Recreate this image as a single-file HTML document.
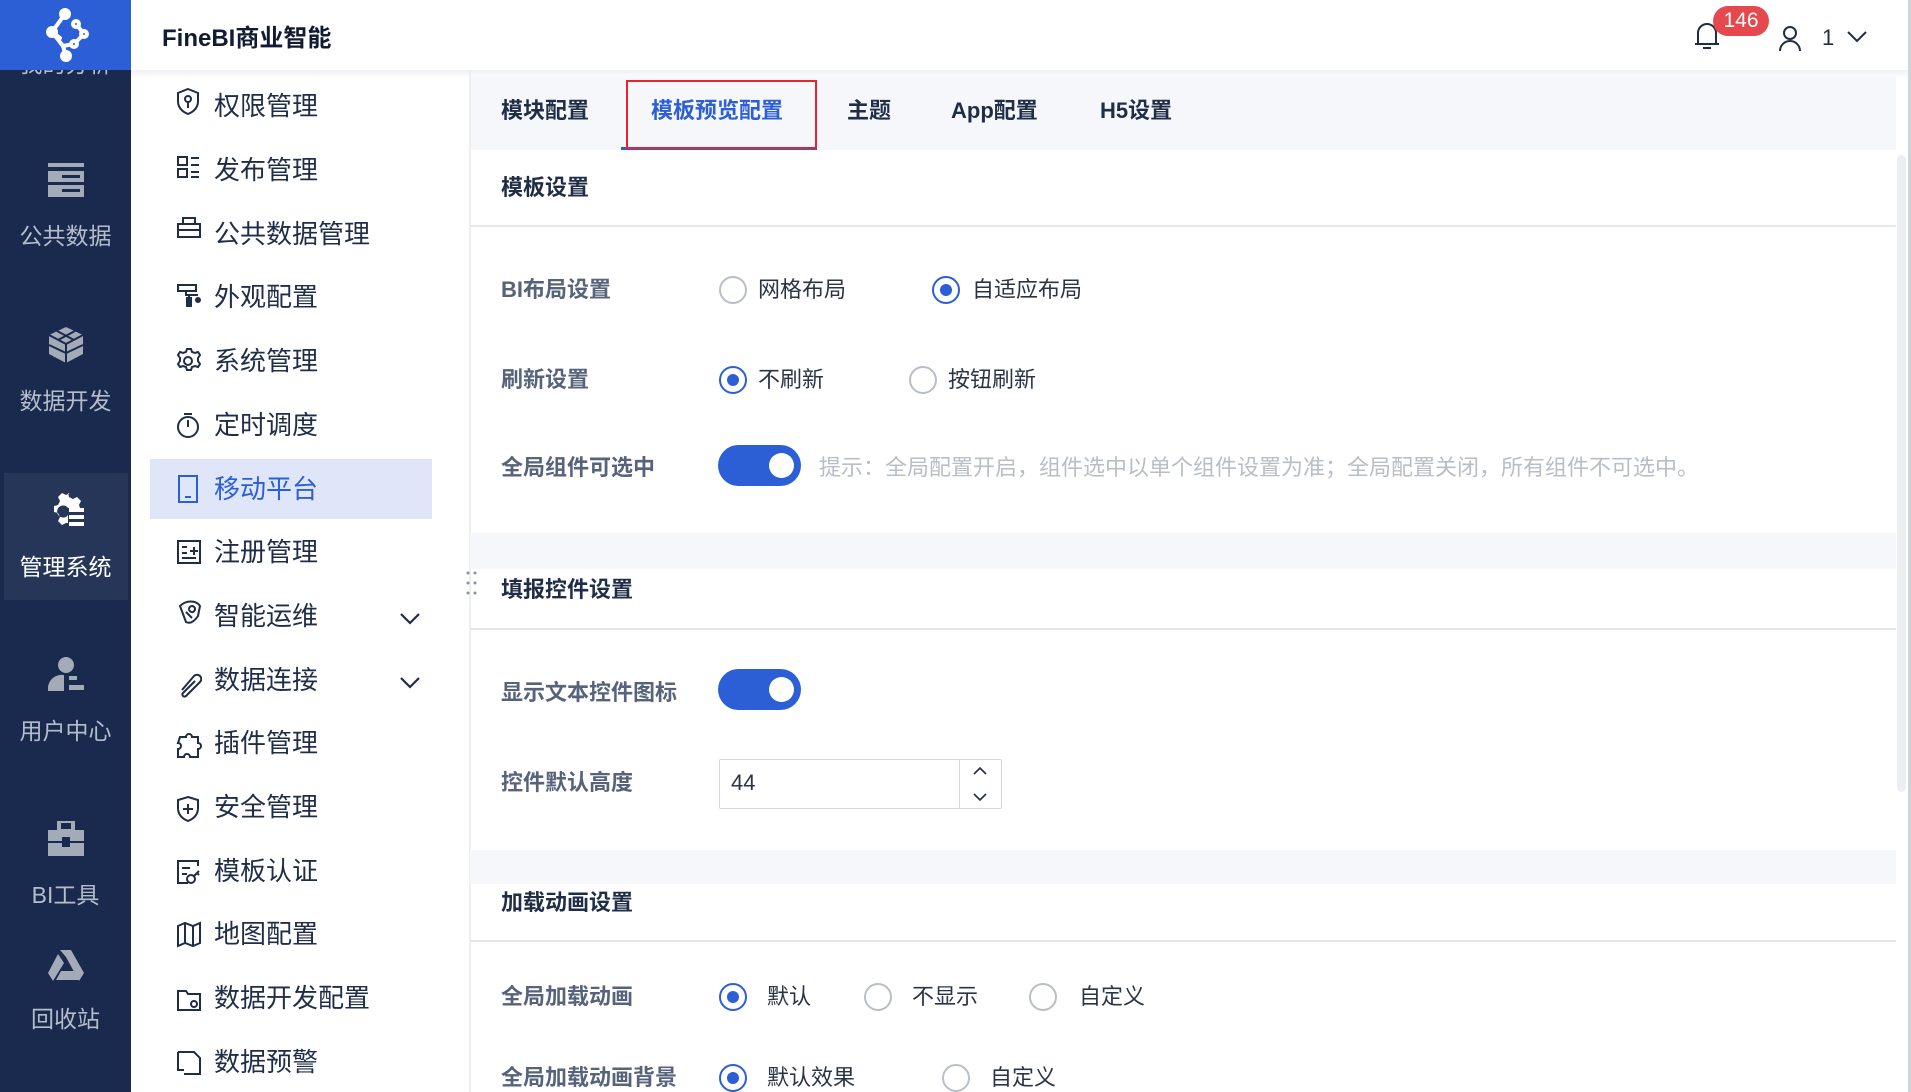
<!DOCTYPE html>
<html><head><meta charset="utf-8"><style>
*{margin:0;padding:0;box-sizing:border-box}
body{width:1911px;height:1092px;overflow:hidden;background:#fff;font-family:"Liberation Sans","Noto Sans CJK SC",sans-serif;position:relative}
.a{position:absolute;white-space:nowrap}
.nav{left:0;top:0;width:131px;height:1092px;background:#1a2a4e}
.nt{left:0;width:131px;text-align:center;color:#b6bdca;font-size:23px;line-height:30px}
.mi{left:214px;font-size:26px;color:#1f2d47;line-height:30px}
.lb{left:501px;font-size:22px;font-weight:bold;color:#56637a;line-height:28px}
.op{font-size:22px;color:#2b3447;line-height:28px}
.rd{width:28px;height:28px;border:2px solid #b9bec7;border-radius:50%}
.rd.on{border-color:#2c5fd6}
.rd.on:after{content:"";position:absolute;left:6px;top:6px;width:12px;height:12px;border-radius:50%;background:#2c5fd6}
.tg{width:83px;height:41px;border-radius:21px;background:#2c5fd6}
.tg:after{content:"";position:absolute;right:7px;top:8px;width:25px;height:25px;border-radius:50%;background:#fff}
.sh{left:501px;font-size:22px;font-weight:bold;color:#1f2d47;line-height:28px}
.hr{left:470px;width:1426px;height:2px;background:#e3e6eb}
.gap{left:470px;width:1426px;background:#f6f7fa}
.tab{top:97px;font-size:22px;font-weight:bold;color:#1f2d47;line-height:28px}
</style></head><body>
<!-- left nav -->
<div class="a nav"></div>
<div class="a nt" style="top:70px;height:8px;overflow:hidden"><span style="position:relative;top:-21px">我的分析</span></div>
<div class="a" style="left:0;top:0;width:131px;height:70px;background:#2c5fd6"></div>
<svg class="a" style="left:38px;top:8px" width="56" height="54" viewBox="0 0 56 54" fill="none" stroke="#fff" stroke-width="4" stroke-linecap="round">
<path d="M27 6 L14 24 L25 38 L28 48"/><path d="M14 24 L22 30"/><path d="M38 16 L46 26 L36 36 L25 38"/>
<circle cx="27" cy="6" r="4" fill="#fff"/><circle cx="14" cy="24" r="4" fill="#fff"/><circle cx="38" cy="16" r="3" fill="#2c5fd6"/><circle cx="46" cy="26" r="3" fill="#2c5fd6"/><circle cx="36" cy="36" r="3" fill="#2c5fd6"/><circle cx="28" cy="48" r="4" fill="#fff"/></svg>
<svg class="a" style="left:48px;top:163px" width="36" height="34"><rect x="0" y="0" width="36" height="4" fill="#a3aab8"/><rect x="0" y="8" width="36" height="11" fill="#a3aab8"/><rect x="0" y="22" width="36" height="12" fill="#a3aab8"/><rect x="14" y="12" width="18" height="3" fill="#1a2a4e"/><rect x="14" y="26" width="18" height="3" fill="#1a2a4e"/></svg>
<div class="a nt" style="top:221px">公共数据</div>
<svg class="a" style="left:47px;top:326px" width="38" height="38" viewBox="0 0 38 38"><path d="M19 1 L36 9 L36 28 L19 37 L2 28 L2 9Z" fill="#a3aab8"/><path d="M2 9 L19 18 L36 9 M19 18 L19 37 M10 5 L27 14 M28 5 L11 14 M2 19 L19 27 L36 19" stroke="#1a2a4e" stroke-width="2" fill="none"/></svg>
<div class="a nt" style="top:386px">数据开发</div>
<div class="a" style="left:4px;top:473px;width:124px;height:127px;background:#263659"></div>
<svg class="a" style="left:48px;top:493px" width="36" height="34" viewBox="0 0 36 34"><path d="M14 0 h6 l1 4 l4 2 l4-2 l4 4 l-2 4 l1 3 h-12 a6 6 0 1 0 0 7 v8 l-2 0 l-4 2 l-4-4 l2-4 l-2-4 l-4-1 v-6 l4-1 l2-4 l-2-4 l4-4 l4 2 l4-2z" fill="#fff"/><rect x="21" y="15" width="15" height="4" fill="#fff"/><rect x="21" y="22" width="15" height="4" fill="#fff"/><rect x="21" y="29" width="15" height="4" fill="#fff"/></svg>
<div class="a nt" style="top:552px;color:#fff">管理系统</div>
<svg class="a" style="left:48px;top:656px" width="36" height="36"><circle cx="18" cy="9" r="8" fill="#a3aab8"/><path d="M0 35 a14 14 0 0 1 16-16 v16z" fill="#a3aab8"/><rect x="21" y="20" width="8" height="4" fill="#a3aab8"/><rect x="21" y="29" width="15" height="5" fill="#a3aab8"/></svg>
<div class="a nt" style="top:716px">用户中心</div>
<svg class="a" style="left:48px;top:821px" width="36" height="35"><rect x="11" y="0" width="14" height="10" fill="none" stroke="#a3aab8" stroke-width="4"/><rect x="0" y="9" width="36" height="11" fill="#a3aab8"/><rect x="0" y="22" width="36" height="13" fill="#a3aab8"/><rect x="14" y="16" width="8" height="10" fill="#1a2a4e"/></svg>
<div class="a nt" style="top:880px">BI工具</div>
<svg class="a" style="left:47px;top:949px" width="38" height="32" viewBox="0 0 38 32"><path d="M13 1 h11 l13 23 l-5 8 l-13-24z M11 5 l6 9 l-11 18 l-5-8z M14 22 h22 l-5 9 h-22z" fill="#a3aab8"/></svg>
<div class="a nt" style="top:1004px">回收站</div>

<!-- top bar -->
<div class="a" style="left:162px;top:24px;font-size:24px;font-weight:bold;color:#111c33;line-height:30px">FineBI商业智能</div>
<svg class="a" style="left:1694px;top:22px" width="26" height="28" fill="none" stroke="#1f2d47" stroke-width="2"><path d="M4 22 V11 a9 9 0 0 1 18 0 V22 M1 22 H25 M9 26 H17"/></svg>
<div class="a" style="left:1713px;top:6px;width:56px;height:30px;border-radius:15px;background:#e5484d;color:#fff;font-size:21px;text-align:center;line-height:30px">146</div>
<svg class="a" style="left:1778px;top:25px" width="24" height="26" fill="none" stroke="#1f2d47" stroke-width="2"><circle cx="12" cy="8" r="6"/><path d="M2 26 a10 10 0 0 1 20 0"/></svg>
<div class="a" style="left:1822px;top:24px;font-size:22px;color:#1f2d47;line-height:28px">1</div>
<svg class="a" style="left:1846px;top:30px" width="22" height="14" fill="none" stroke="#1f2d47" stroke-width="2"><path d="M2 2 L11 11 L20 2"/></svg>
<div class="a" style="left:131px;top:70px;width:1780px;height:8px;background:linear-gradient(#eef0f4,#fff0)"></div>

<!-- sub menu -->
<div class="a" style="left:469px;top:70px;width:2px;height:1022px;background:#eceef2"></div>
<div class="a" style="left:150px;top:459px;width:282px;height:60px;background:#dfe6f9"></div>
<div class="a mi" style="top:91px">权限管理</div>
<div class="a mi" style="top:155px">发布管理</div>
<div class="a mi" style="top:219px">公共数据管理</div>
<div class="a mi" style="top:282px">外观配置</div>
<div class="a mi" style="top:346px">系统管理</div>
<div class="a mi" style="top:410px">定时调度</div>
<div class="a mi" style="top:474px;color:#2c5fd6">移动平台</div>
<div class="a mi" style="top:537px">注册管理</div>
<div class="a mi" style="top:601px">智能运维</div>
<div class="a mi" style="top:665px">数据连接</div>
<div class="a mi" style="top:728px">插件管理</div>
<div class="a mi" style="top:792px">安全管理</div>
<div class="a mi" style="top:856px">模板认证</div>
<div class="a mi" style="top:919px">地图配置</div>
<div class="a mi" style="top:983px">数据开发配置</div>
<div class="a mi" style="top:1047px">数据预警</div>
<svg class="a" style="left:176px;top:0" width="26" height="1092" fill="none" stroke="#1f2d47" stroke-width="2">
<path d="M12 89 l10 4 v8 c0 7-5 11-10 13 c-5-2-10-6-10-13 v-8z"/><circle cx="12" cy="99" r="3"/><path d="M12 102 v6"/>
<path d="M2 157 h9 v8 h-9z M2 169 h9 v8 h-9z M15 158 h8 M15 165 h8 M15 172 h8 M15 177 h8"/>
<path d="M2 224 h22 v13 h-22z M7 224 v-6 h12 v6 M2 230 h22"/>
<path d="M2 285 h18 v6 h-18z M10 291 v4 h12 M13 295 v10" /><rect x="11" y="298" width="4" height="8" fill="#1f2d47"/><circle cx="22" cy="300" r="2" fill="#1f2d47"/>
<circle cx="12" cy="361" r="4"/><path d="M12 349 l3 0 1 3 3 1 3-1 2 3-2 3 0 3 2 3-2 3-3-1-3 1-1 3h-4l-1-3-3-1-3 1-2-3 2-3v-3l-2-3 2-3 3 1 3-1 1-3z"/>
<circle cx="12" cy="427" r="10"/><path d="M8 414 h8 M12 420 v7"/>
<path d="M3 476 h18 v26 h-18z" stroke="#2c5fd6"/><path d="M9 497 h6" stroke="#2c5fd6"/>
<path d="M2 541 h22 v22 h-22z M6 547 h5 M6 553 h5 M6 558 h14 M14 551 h8 M18 547 v8"/>
<path d="M4 606 c6-6 16-6 20 0 l-2 10 c-4 6-8 8-12 6z M10 612 l6 6 M13 609 a3 3 0 1 1 0 0.1"/>
<path d="M6 690 l12-14 a4 4 0 0 1 6 6 l-14 14 a2 2 0 0 1-3-3 l12-12"/>
<path d="M4 737 h6 a3 3 0 0 1 6 0 h6 v6 a3 3 0 0 1 0 6 v8 h-8 a3 3 0 0 0-6 0 h-6 v-8 a3 3 0 0 0 0-6z"/>
<path d="M12 797 l10 3 v8 c0 7-5 11-10 13 c-5-2-10-6-10-13 v-8z M12 804 v10 M7 809 h10"/>
<path d="M22 866 v-5 h-20 v22 h10 M6 868 h8 M6 874 h5"/><circle cx="15" cy="879" r="4"/><path d="M18 876 l5-5 M21 873 l2 2"/>
<path d="M2 926 l7-3 8 3 7-3 v20 l-7 3-8-3-7 3z M9 923 v20 M17 926 v20"/>
<path d="M2 991 h8 l2 3 h12 v16 h-22z"/><circle cx="18" cy="1004" r="3"/>
<path d="M2 1052 h16 l6 6 v16 h-16 M2 1052 v18 h6"/>
</svg>
<svg class="a" style="left:399px;top:610px" width="24" height="80" fill="none" stroke="#1f2d47" stroke-width="2.2"><path d="M2 4 L11 13 L20 4"/><path d="M2 68 L11 77 L20 68"/></svg>
<svg class="a" style="left:466px;top:570px" width="12" height="28"><g fill="#8a93a3"><circle cx="2" cy="3" r="1.5"/><circle cx="9" cy="3" r="1.5"/><circle cx="2" cy="13" r="1.5"/><circle cx="9" cy="13" r="1.5"/><circle cx="2" cy="23" r="1.5"/><circle cx="9" cy="23" r="1.5"/></g></svg>

<!-- content -->
<div class="a" style="left:471px;top:76px;width:1425px;height:74px;background:#f6f7fa"></div>
<div class="a tab" style="left:501px">模块配置</div>
<div class="a tab" style="left:651px;color:#2c5fd6">模板预览配置</div>
<div class="a tab" style="left:847px">主题</div>
<div class="a tab" style="left:951px">App配置</div>
<div class="a tab" style="left:1100px">H5设置</div>
<div class="a" style="left:621px;top:147px;width:196px;height:3px;background:#2c5fd6"></div>
<div class="a" style="left:626px;top:80px;width:191px;height:69px;border:2px solid #e8232e"></div>

<div class="a sh" style="top:174px">模板设置</div>
<div class="a hr" style="top:225px"></div>
<div class="a lb" style="top:276px">BI布局设置</div>
<div class="a rd" style="left:719px;top:276px"></div><div class="a op" style="left:758px;top:276px">网格布局</div>
<div class="a rd on" style="left:932px;top:276px"></div><div class="a op" style="left:972px;top:276px">自适应布局</div>
<div class="a lb" style="top:366px">刷新设置</div>
<div class="a rd on" style="left:719px;top:366px"></div><div class="a op" style="left:758px;top:366px">不刷新</div>
<div class="a rd" style="left:909px;top:366px"></div><div class="a op" style="left:948px;top:366px">按钮刷新</div>
<div class="a lb" style="top:454px">全局组件可选中</div>
<div class="a tg" style="left:718px;top:445px"></div>
<div class="a" style="left:819px;top:454px;font-size:22px;color:#b8bdc6;line-height:28px">提示：全局配置开启，组件选中以单个组件设置为准；全局配置关闭，所有组件不可选中。</div>
<div class="a gap" style="top:533px;height:36px"></div>
<div class="a sh" style="top:576px">填报控件设置</div>
<div class="a hr" style="top:628px"></div>
<div class="a lb" style="top:679px">显示文本控件图标</div>
<div class="a tg" style="left:718px;top:669px"></div>
<div class="a lb" style="top:769px">控件默认高度</div>
<div class="a" style="left:719px;top:759px;width:283px;height:50px;border:1px solid #d3d7de;border-radius:2px"></div>
<div class="a" style="left:959px;top:760px;width:1px;height:48px;background:#d3d7de"></div>
<div class="a op" style="left:731px;top:769px">44</div>
<svg class="a" style="left:972px;top:766px" width="16" height="36" fill="none" stroke="#1f2d47" stroke-width="1.6"><path d="M2 8 L8 2 L14 8 M2 28 L8 34 L14 28"/></svg>
<div class="a gap" style="top:850px;height:34px"></div>
<div class="a sh" style="top:889px">加载动画设置</div>
<div class="a hr" style="top:940px"></div>
<div class="a lb" style="top:983px">全局加载动画</div>
<div class="a rd on" style="left:719px;top:983px"></div><div class="a op" style="left:767px;top:983px">默认</div>
<div class="a rd" style="left:864px;top:983px"></div><div class="a op" style="left:912px;top:983px">不显示</div>
<div class="a rd" style="left:1029px;top:983px"></div><div class="a op" style="left:1079px;top:983px">自定义</div>
<div class="a lb" style="top:1064px">全局加载动画背景</div>
<div class="a rd on" style="left:719px;top:1064px"></div><div class="a op" style="left:767px;top:1064px">默认效果</div>
<div class="a rd" style="left:942px;top:1064px"></div><div class="a op" style="left:990px;top:1064px">自定义</div>

<div class="a" style="left:1897px;top:155px;width:9px;height:637px;border-radius:5px;background:#eceef2"></div>
<div class="a" style="left:1908px;top:0;width:3px;height:1092px;background:#cfd3da"></div>
</body></html>
